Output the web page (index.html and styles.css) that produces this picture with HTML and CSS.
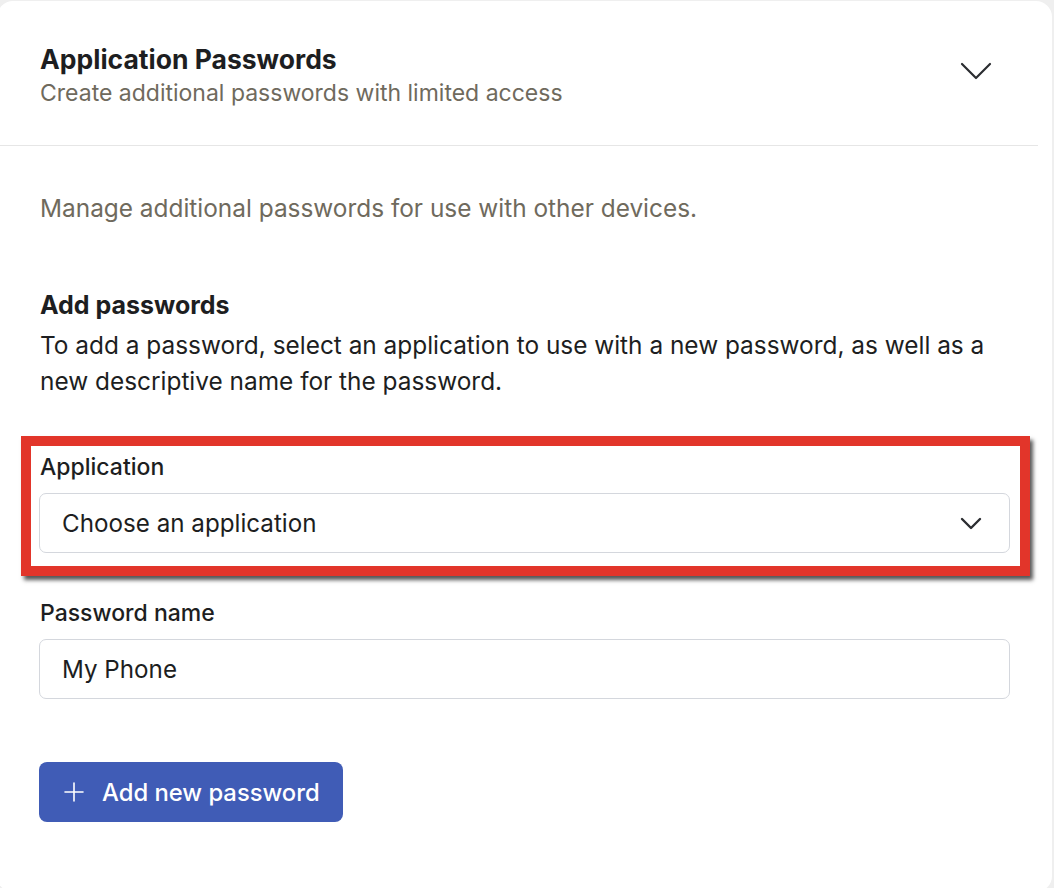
FILE: index.html
```html
<!DOCTYPE html>
<html>
<head>
    <title>Application Passwords</title>
    <link rel="stylesheet" href="styles.css">
</head>
<body>

<div class="settings-card">
    <div class="card-header">
        <div>
            <h2 class="card-title">Application Passwords</h2>
            <p class="card-subtitle">Create additional passwords with limited access</p>
        </div>
        <svg class="header-chevron" width="32" height="18" viewBox="0 0 32 18">
            <path d="M2 2 L16 16 L30 2" fill="none" stroke="#2b2d31" stroke-width="2.2" stroke-linecap="round" stroke-linejoin="round"/>
        </svg>
    </div>

    <div class="card-body">
        <p class="intro">Manage additional passwords for use with other devices.</p>

        <h3 class="section-title">Add passwords</h3>
        <p class="section-text">To add a password, select an application to use with a new password, as well as a new descriptive name for the password.</p>

        <form class="password-form">
            <div class="field highlighted">
                <label for="application">Application</label>
                <div class="select-box" id="application">
                    <span>Choose an application</span>
                    <svg width="22" height="13" viewBox="0 0 22 13">
                        <path d="M2 2 L11 11 L20 2" fill="none" stroke="#2b2d31" stroke-width="2.4" stroke-linecap="round" stroke-linejoin="round"/>
                    </svg>
                </div>
            </div>

            <div class="field">
                <label for="passwordName">Password name</label>
                <input type="text" id="passwordName" value="My Phone">
            </div>

            <button type="button" class="add-button">
                <svg width="20" height="20" viewBox="0 0 20 20">
                    <path d="M10 1 V19 M1 10 H19" stroke="#fff" stroke-width="1.6" stroke-linecap="round"/>
                </svg>
                Add new password
            </button>
        </form>
    </div>
</div>

</body>
</html>
```

FILE: styles.css
```css
html, body {
    height: 888px;
}

body {
    margin: 0;
    overflow: hidden;
    background-color: #efefef;
    font-family: Inter, "Noto Sans", sans-serif;
    color: #1d1e21;
}

.settings-card {
    width: 1055px;
    min-height: 891px;
    margin: 1px 0 0 -3px;
    background-color: #fff;
    border-radius: 16px;
}

.card-header {
    display: flex;
    align-items: center;
    justify-content: space-between;
    margin-right: 14px;
    padding: 42px 46px 36px 43px;
    border-bottom: 1px solid #e6e6e6;
}

.card-title {
    margin: 0;
    font-size: 26.5px;
    line-height: 32px;
    font-weight: 700;
}

.card-subtitle {
    margin: 2px 0 0;
    font-size: 23px;
    line-height: 32px;
    color: #6f6a5d;
}

.header-chevron {
    margin-top: -10px;
}

.card-body {
    padding: 46px 42px 40px 42px;
}

.intro {
    margin: 0 0 0 1px;
    font-size: 24.4px;
    line-height: 32px;
    color: #6f6a5d;
}

.section-title {
    margin: 63px 0 0 1px;
    font-size: 25px;
    line-height: 36px;
    font-weight: 700;
}

.section-text {
    margin: 4px 0 0 1px;
    font-size: 24.4px;
    line-height: 36px;
}

.password-form {
    margin-top: 54px;
}

.field {
    display: flex;
    flex-direction: column;
    gap: 12px;
    margin-bottom: 46px;
}

.field label {
    margin-left: 1px;
    font-size: 23px;
    line-height: 28px;
    font-weight: 500;
}

/* annotation box round the application picker */
.highlighted {
    position: relative;
}

.highlighted::after {
    content: "";
    position: absolute;
    top: -17px;
    left: -18px;
    right: -20px;
    bottom: -23px;
    border: 10px solid #e2352a;
    box-shadow: 3px 4px 4px rgba(30, 30, 30, 0.75);
    pointer-events: none;
}

.select-box, .field input {
    display: flex;
    align-items: center;
    justify-content: space-between;
    box-sizing: border-box;
    width: 100%;
    height: 60px;
    padding: 0 27px 0 22px;
    border: 1px solid #d4d7dd;
    border-radius: 7px;
    background-color: #fff;
    font-family: inherit;
    font-size: 24.2px;
    color: #1d1e21;
}

.field input {
    outline: none;
}

.add-button {
    display: flex;
    align-items: center;
    gap: 18px;
    height: 60px;
    margin-top: 63px;
    padding: 0 23px 0 25px;
    border: none;
    border-radius: 8px;
    background-color: #405cb6;
    color: #fff;
    font-family: inherit;
    font-size: 23.8px;
    font-weight: 500;
    cursor: pointer;
}
```
